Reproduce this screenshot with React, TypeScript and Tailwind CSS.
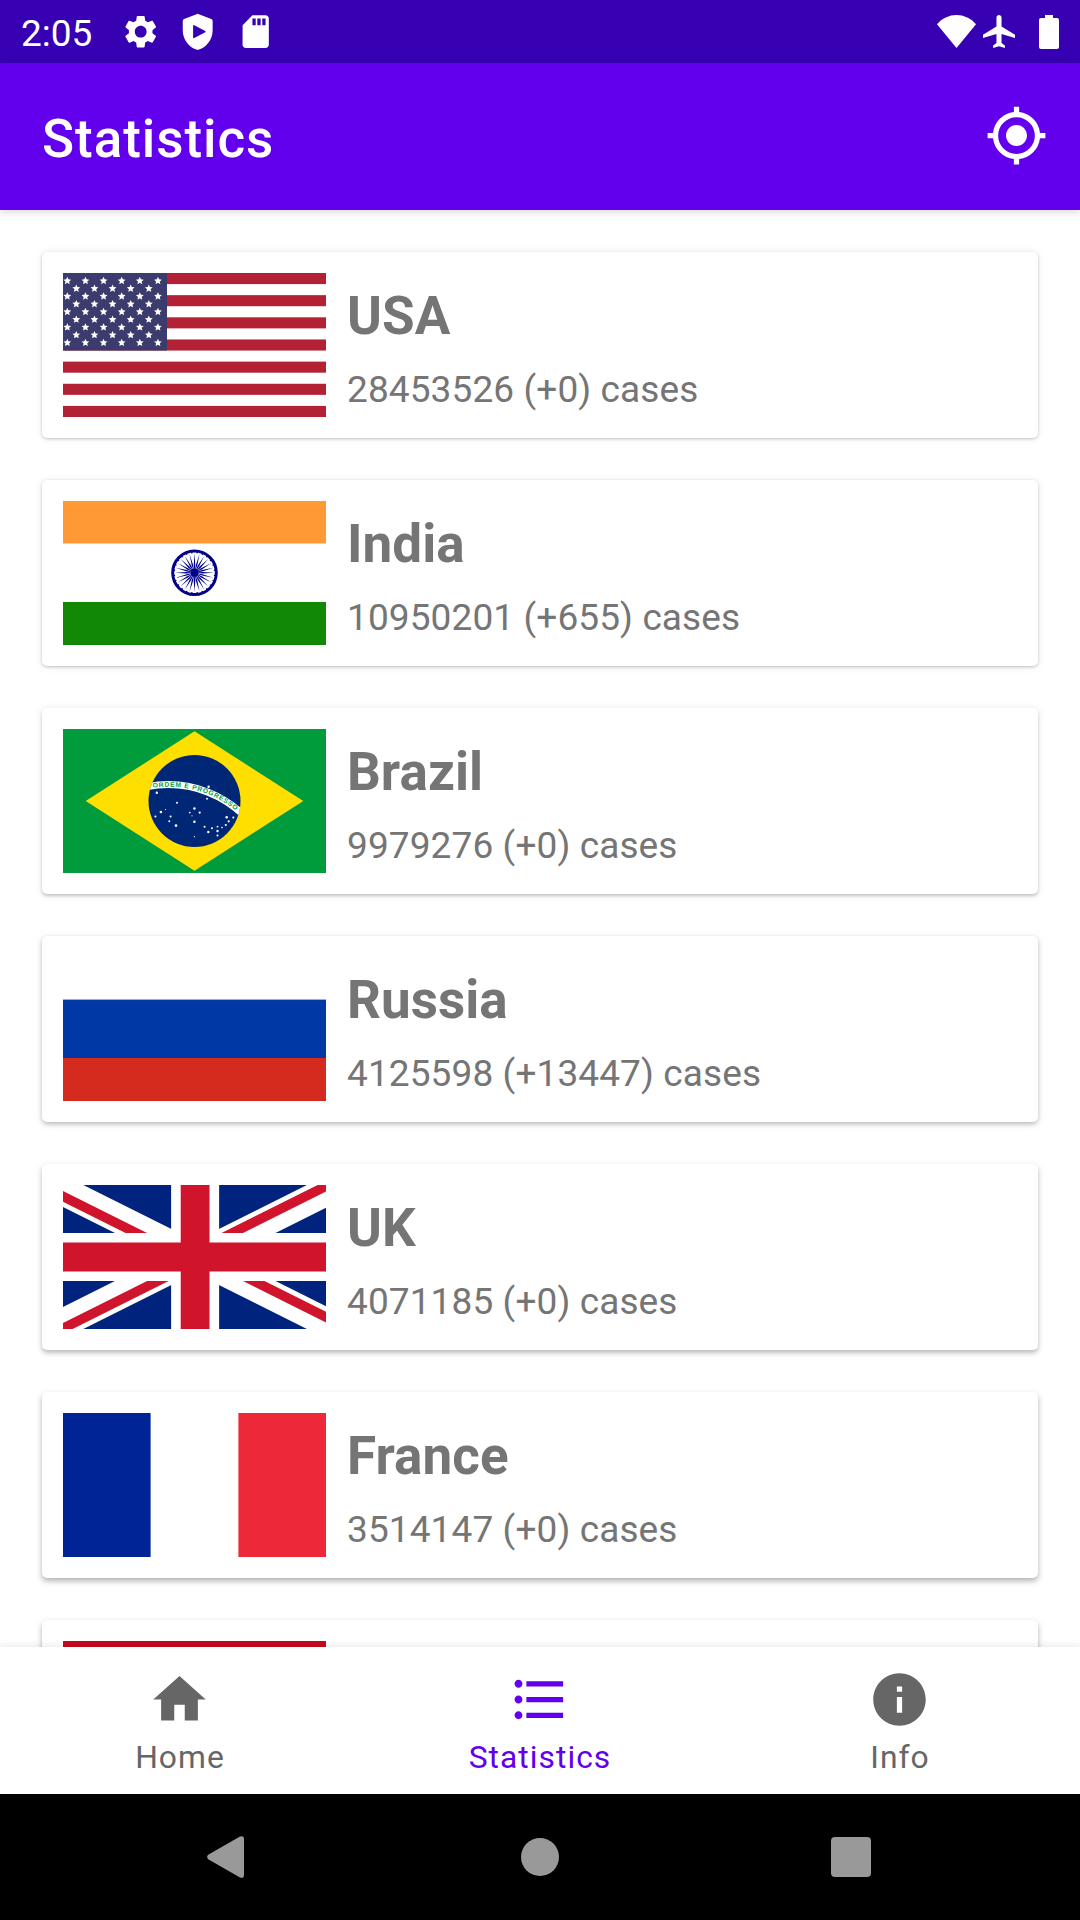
import React from 'react';
import { MdSettings, MdSdCard, MdMyLocation } from 'react-icons/md';

const FLAG = 'block h-[144px] w-[263px] shrink-0';

function UsaFlag() {
  const stars: React.ReactNode[] = [];
  for (let row = 0; row < 9; row++) {
    const odd = row % 2 === 1;
    for (let col = 0; col < (odd ? 5 : 6); col++) {
      const cx = (odd ? 13.3 : 4.3) + col * 18.13;
      const cy = 7.9 + row * 7.73;
      const points = Array.from({ length: 10 }, (_, i) => {
        const r = i % 2 === 0 ? 4.1 : 1.9;
        const a = (i * Math.PI) / 5;
        return `${(cx + r * Math.sin(a)).toFixed(2)},${(cy - r * Math.cos(a)).toFixed(2)}`;
      }).join(' ');
      stars.push(<polygon key={`${row}-${col}`} points={points} fill="#fff" />);
    }
  }
  return (
    <svg className={FLAG} viewBox="0 0 263 144">
      <rect width="263" height="144" fill="#fff" />
      {[0, 2, 4, 6, 8, 10, 12].map((i) => (
        <rect key={i} y={(i * 144) / 13} width="263" height={144 / 13} fill="#b22234" />
      ))}
      <rect width="104" height={(7 * 144) / 13} fill="#3c3b6e" />
      {stars}
    </svg>
  );
}

function IndiaFlag() {
  return (
    <svg className={FLAG} viewBox="0 0 263 144">
      <rect width="263" height="144" fill="#fff" />
      <rect width="263" height="42.5" fill="#ff9933" />
      <rect y="101" width="263" height="43" fill="#128807" />
      <g transform="translate(131.5 71.8)" fill="#000088">
        <circle r="21.8" fill="none" stroke="#000088" strokeWidth="3" />
        <circle r="4" />
        {Array.from({ length: 24 }, (_, i) => (
          <g key={i} transform={`rotate(${i * 15})`}>
            <path d="M0 -19.5L0.75 -8L0 0L-0.75 -8Z" />
            <circle cx="2.65" cy="-20.1" r="0.8" />
          </g>
        ))}
      </g>
    </svg>
  );
}

const BRAZIL_STARS: [number, number, number][] = [
  [93.8, 63.7, 1.4], [145.6, 57.7, 1.4], [144, 69.7, 1.1], [114, 73.8, 1.2], [97.9, 83, 1.5],
  [102.6, 80.5, 0.7], [92.4, 87.4, 1.2], [107.6, 87.6, 1.2], [106.3, 92.3, 1.1], [113, 96.6, 1.5],
  [131.4, 79.5, 1.4], [126.7, 83.6, 1], [136.7, 83.6, 1.3], [129, 86.8, 0.7], [131.4, 92.7, 1.5],
  [131.4, 107.7, 0.7], [141.6, 97.8, 1.2], [149, 99.3, 1.2], [145.3, 103, 1.4], [154.5, 97.6, 1.1],
  [154.5, 102, 1.4], [154.5, 106.6, 1.2], [159, 98.5, 1], [162.8, 96, 1.3], [165.7, 92.3, 1.3],
  [163.7, 88.3, 1.5], [170.3, 88.6, 1.2],
];

function BrazilFlag() {
  return (
    <svg className={FLAG} viewBox="0 0 263 144">
      <defs>
        <clipPath id="globe">
          <circle cx="131.5" cy="72" r="46" />
        </clipPath>
        <path id="motto-line" d="M 90 58.9 A 106.2 106.2 0 0 1 177 85.1" />
      </defs>
      <rect width="263" height="144" fill="#009c3b" />
      <path d="M22.7 72L131.5 2.3L240.3 72L131.5 141.7Z" fill="#ffdf00" />
      <circle cx="131.5" cy="72" r="46" fill="#002776" />
      <circle cx="105.2" cy="164" r="108.4" fill="none" stroke="#fff" strokeWidth="7" clipPath="url(#globe)" />
      <text fill="#009c3b" fontFamily="Liberation Sans" fontWeight="700" fontSize="6.7">
        <textPath href="#motto-line" textLength="88" lengthAdjust="spacing">
          ORDEM E PROGRESSO
        </textPath>
      </text>
      {BRAZIL_STARS.map(([x, y, r], i) => (
        <circle key={i} cx={x} cy={y} r={r * 0.85} fill="#fff" />
      ))}
    </svg>
  );
}

function RussiaFlag() {
  return (
    <svg className={FLAG} viewBox="0 0 263 144">
      <rect width="263" height="144" fill="#fff" />
      <rect y="42.6" width="263" height="59" fill="#0039a6" />
      <rect y="101" width="263" height="43" fill="#d52b1e" />
    </svg>
  );
}

function UkFlag() {
  return (
    <svg className={FLAG} viewBox="-0.13 0 60 30" preserveAspectRatio="xMidYMid slice">
      <defs>
        <clipPath id="saltire">
          <path d="M30,15h30v15zv15h-30zh-30v-15zv-15h30z" />
        </clipPath>
      </defs>
      <rect width="60" height="30" fill="#00247d" />
      <path d="M0,0L60,30M60,0L0,30" stroke="#fff" strokeWidth="6" />
      <path d="M0,0L60,30M60,0L0,30" stroke="#cf142b" strokeWidth="4" clipPath="url(#saltire)" />
      <path d="M30,0V30M0,15H60" stroke="#fff" strokeWidth="10" />
      <path d="M30,0V30M0,15H60" stroke="#cf142b" strokeWidth="6" />
    </svg>
  );
}

function FranceFlag() {
  return (
    <svg className={FLAG} viewBox="0 0 263 144">
      <rect width="263" height="144" fill="#fff" />
      <rect width="87.6" height="144" fill="#002395" />
      <rect x="175.4" width="87.6" height="144" fill="#ed2939" />
    </svg>
  );
}

function SpainFlag() {
  return (
    <svg className={FLAG} viewBox="0 0 263 144">
      <rect width="263" height="144" fill="#c60b1e" />
      <rect y="36" width="263" height="72" fill="#ffc400" />
    </svg>
  );
}

const COUNTRIES = [
  { name: 'USA', cases: '28453526 (+0) cases', Flag: UsaFlag, shadow: 'shadow-[0_1px_3px_rgba(0,0,0,0.20),0_0_8px_rgba(0,0,0,0.08)]' },
  { name: 'India', cases: '10950201 (+655) cases', Flag: IndiaFlag, shadow: 'shadow-[0_1px_3px_rgba(0,0,0,0.20),0_1px_8px_rgba(0,0,0,0.09)]' },
  { name: 'Brazil', cases: '9979276 (+0) cases', Flag: BrazilFlag, shadow: 'shadow-[0_2px_3px_rgba(0,0,0,0.18),0_1px_8px_rgba(0,0,0,0.10)]' },
  { name: 'Russia', cases: '4125598 (+13447) cases', Flag: RussiaFlag, shadow: 'shadow-[0_2px_4px_rgba(0,0,0,0.20),0_2px_8px_rgba(0,0,0,0.10)]' },
  { name: 'UK', cases: '4071185 (+0) cases', Flag: UkFlag, shadow: 'shadow-[0_3px_4px_rgba(0,0,0,0.19),0_2px_9px_rgba(0,0,0,0.11)]' },
  { name: 'France', cases: '3514147 (+0) cases', Flag: FranceFlag, shadow: 'shadow-[0_3px_5px_rgba(0,0,0,0.22),0_3px_9px_rgba(0,0,0,0.11)]' },
  { name: '', cases: '', Flag: SpainFlag, shadow: 'shadow-[0_3px_5px_rgba(0,0,0,0.22),0_3px_9px_rgba(0,0,0,0.11)]' },
];

function StatusBar() {
  return (
    <div className="flex h-[63px] shrink-0 items-center justify-between bg-[#3700b3] pr-[12px] pl-[21px] text-white">
      <div className="flex items-center">
        <span className="w-[99.5px] pt-[3px] text-[37px] leading-[43px]">2:05</span>
        <div className="flex items-center gap-[18.4px]">
          <MdSettings className="size-[39.4px]" />
          <svg className="size-[39.4px]" viewBox="0 0 24 24" fill="currentColor">
            <path
              fillRule="evenodd"
              d="M11.3 1.3Q12 .9 12.7 1.3L20.3 4.3Q21.1 4.7 21.1 5.5V11.3C21.1 16.8 17.2 21.6 12.8 22.9Q12 23.2 11.2 22.9C6.8 21.6 2.9 16.8 2.9 11.3V5.5Q2.9 4.7 3.7 4.3ZM9.2 8.4V15.6Q9.3 16.3 9.9 15.9L16.6 12.4Q17.2 12 16.6 11.6L9.9 8Q9.3 7.8 9.2 8.4Z"
            />
          </svg>
          <MdSdCard className="size-[39.4px]" />
        </div>
      </div>
      <div className="flex items-center">
        <svg className="mr-[7px] h-[33px] w-[39px]" viewBox="0 0 39 33" fill="currentColor">
          <path d="M0 9.3C5 3.4 12 0 19.5 0S34 3.4 39 9.3L19.5 33Z" />
        </svg>
        <svg className="mr-[24px] h-[33px] w-[32px]" viewBox="2 2 19 20" preserveAspectRatio="none" fill="currentColor">
          <path d="M21 16v-2l-8-5V3.500c0-.83-.67-1.500-1.500-1.500S10 2.670 10 3.500V9l-8 5v2l8-2.500V19l-2 1.500V22l3.500-1 3.500 1v-1.500L13 19v-5.500l8 2.500z" />
        </svg>
        <svg className="mr-[9px] h-[34px] w-[20px]" viewBox="0 0 20 34" fill="currentColor">
          <path d="M6 0h8v3h4q2 0 2 2v27q0 2-2 2H2q-2 0-2-2V5q0-2 2-2h4z" />
        </svg>
      </div>
    </div>
  );
}

function Tab({ label, active, children }: { label: string; active?: boolean; children: React.ReactNode }) {
  return (
    <div className={`flex w-[294px] flex-col items-center pt-[21px] ${active ? 'text-[#6200ee]' : 'text-[#666666]'}`}>
      <svg className="mr-[1px] size-[63px]" viewBox="0 0 24 24" fill="currentColor">
        {children}
      </svg>
      <span className="mt-[8px] text-[31.8px] leading-[37px] tracking-[1.03px]">{label}</span>
    </div>
  );
}

export default function App() {
  return (
    <div className="flex h-[1920px] w-[1080px] flex-col overflow-hidden bg-white font-[Roboto,sans-serif]">
      <StatusBar />
      <header className="relative z-10 flex h-[147px] shrink-0 items-center justify-between bg-[#6200ee] pr-[32px] pl-[42px] text-white shadow-[0_2px_8px_rgba(0,0,0,0.16)]">
        <h1 className="pt-[4px] text-[53px] leading-[62px] font-medium tracking-[0.95px]">Statistics</h1>
        <MdMyLocation className="mb-[2px] size-[63px]" />
      </header>

      <main className="flex min-h-0 flex-1 flex-col gap-[42px] overflow-hidden px-[42px] pt-[42px]">
        {COUNTRIES.map(({ name, cases, Flag, shadow }, i) => (
          <article key={i} className={`flex h-[186px] shrink-0 gap-[21px] rounded-[5px] bg-white p-[21px] ${shadow}`}>
            <Flag />
            <div className="flex flex-col pt-[12px] text-[#757575]">
              <h2 className="text-[53px] leading-[62px] font-bold tracking-[0.05px]">{name}</h2>
              <p className="mt-[21px] text-[37px] leading-[43px] tracking-[0.11px]">{cases}</p>
            </div>
          </article>
        ))}
      </main>

      <nav className="relative z-10 flex h-[147px] shrink-0 justify-center bg-white shadow-[0_-1px_8px_rgba(0,0,0,0.10)]">
        <div className="flex gap-[66px]">
          <Tab label="Home">
            <path d="M10 20v-6h4v6h5v-8h3L12 3 2 12h3v8z" />
          </Tab>
          <Tab label="Statistics" active>
            <path d="M4 10.500c-.83 0-1.500.67-1.500 1.500s.67 1.500 1.500 1.500 1.500-.67 1.500-1.500-.67-1.500-1.500-1.500zm0-6c-.83 0-1.500.67-1.500 1.500S3.170 7.500 4 7.500 5.500 6.830 5.500 6 4.830 4.500 4 4.500zm0 12c-.83 0-1.500.68-1.500 1.500s.68 1.500 1.500 1.500 1.500-.68 1.500-1.500-.67-1.500-1.500-1.500zM7 19h14v-2H7v2zm0-6h14v-2H7v2zm0-8v2h14V5H7z" />
          </Tab>
          <Tab label="Info">
            <path d="M12 2C6.480 2 2 6.480 2 12s4.480 10 10 10 10-4.480 10-10S17.520 2 12 2zm1 15h-2v-6h2v6zm0-8h-2V7h2v2z" />
          </Tab>
        </div>
      </nav>

      <div className="flex h-[126px] shrink-0 items-center justify-between bg-black pr-[209px] pl-[207px] text-[#999999]">
        <svg className="h-[42px] w-[37px]" viewBox="0 0 37 42" fill="currentColor">
          <path d="M1.200 18.800L33 .5Q37 -.8 37 3V39Q37 42.800 33 41.500L1.200 23.200Q-1 21 1.200 18.800Z" />
        </svg>
        <div className="ml-[5px] size-[38px] rounded-full bg-[#999999]" />
        <div className="size-[40px] rounded-[4px] bg-[#999999]" />
      </div>
    </div>
  );
}
